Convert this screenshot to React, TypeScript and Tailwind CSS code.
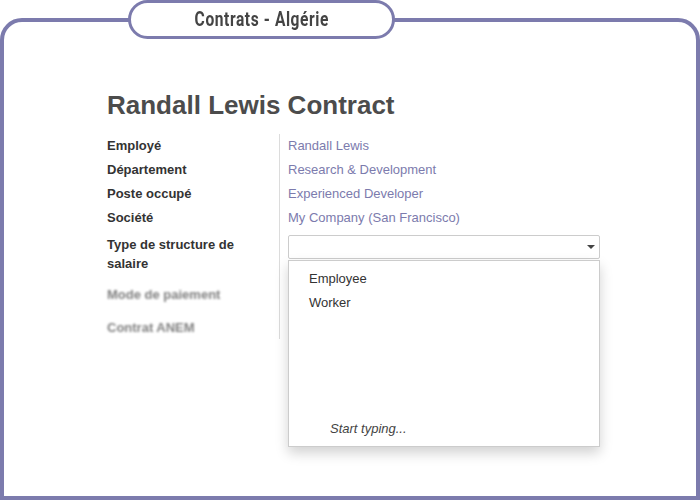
import React from "react";

const labelFont = { fontFamily: '"Liberation Sans", Arial, sans-serif' };

function Row({ label, value }: { label: string; value: string }) {
  return (
    <div className="flex h-[24px] items-center">
      <div className="w-[173px] shrink-0 border-r border-[#dcdcdc] h-full flex items-center text-[13px] font-bold text-[#333]">
        {label}
      </div>
      <div className="pl-[8px] text-[13px] text-[#7c7bad]">{value}</div>
    </div>
  );
}

export default function App() {
  return (
    <div className="relative w-[700px] h-[500px] bg-white overflow-hidden" style={labelFont}>
      <div className="mt-[18px] h-[482px] border-4 border-[#7c7bad] rounded-t-[22px] pl-[103px] pt-[68px]">
        <h1 className="text-[26px] leading-[30px] font-bold text-[#4c4c4c]">Randall Lewis Contract</h1>
        <div className="mt-[14px] flex flex-col">
          <Row label="Employé" value="Randall Lewis" />
          <Row label="Département" value="Research & Development" />
          <Row label="Poste occupé" value="Experienced Developer" />
          <Row label="Société" value="My Company (San Francisco)" />
          <div className="flex">
            <div className="w-[173px] shrink-0 border-r border-[#dcdcdc] pt-[5px] text-[13px] leading-[19px] font-bold text-[#333]">
              <div className="w-[150px]">Type de structure de salaire</div>
              <div className="mt-[9px] h-[24px] flex items-center text-[#808080] blur-[1.2px]">Mode de paiement</div>
              <div className="mt-[9px] h-[24px] flex items-center text-[#808080] blur-[1.2px]">Contrat ANEM</div>
            </div>
            <div className="pl-[8px] pt-[5px]">
              <div className="relative w-[312px]">
                <div className="h-[24px] border border-[#cccccc] rounded-[2px] bg-white flex items-center justify-end pr-[4px]">
                  <div className="w-0 h-0 border-l-[4px] border-r-[4px] border-t-[4px] border-l-transparent border-r-transparent border-t-[#444]" />
                </div>
                <div className="absolute left-0 top-[25px] w-[312px] h-[187px] bg-white border border-[#cccccc] shadow-[0_6px_12px_rgba(0,0,0,0.18)] flex flex-col text-[13px] text-[#333]">
                  <div className="pt-[6px] pl-[20px]">
                    <div className="h-[24px] flex items-center">Employee</div>
                    <div className="h-[24px] flex items-center">Worker</div>
                  </div>
                  <div className="mt-auto mb-[8px] pl-[41px] h-[18px] flex items-center italic text-[#444]">Start typing...</div>
                </div>
              </div>
            </div>
          </div>
        </div>
      </div>
      <div className="absolute left-[128px] top-0 w-[267px] h-[39px] rounded-full border-[3px] border-[#7c7bad] bg-white flex items-center justify-center pt-[1px]">
        <span
          className="text-[21px] font-bold text-[#444] tracking-[0.8px] scale-x-[0.74] whitespace-nowrap"
          style={{ fontFamily: 'Roboto, "Liberation Sans", sans-serif' }}
        >
          Contrats - Algérie
        </span>
      </div>
    </div>
  );
}
